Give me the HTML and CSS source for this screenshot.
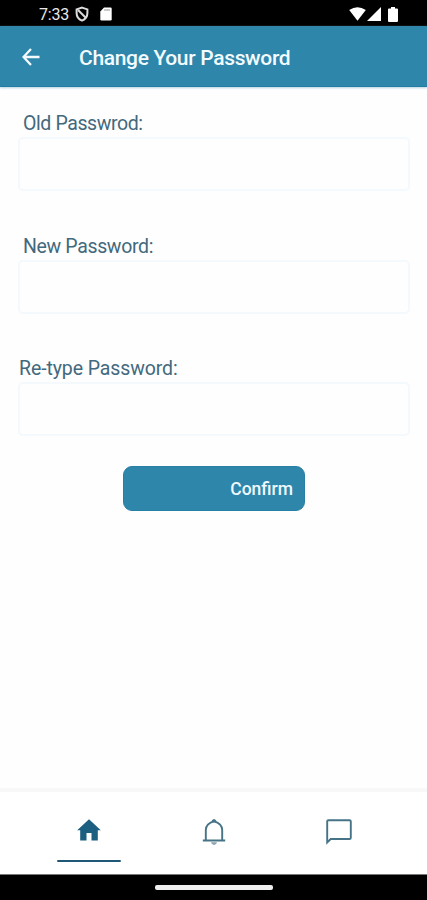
FILE: index.html
```
<!DOCTYPE html>
<html lang="en">

<head>
    <meta charset="UTF-8">
    <meta name="viewport" content="width=device-width, initial-scale=1.0">
    <title>Change Your Password</title>
    <link rel="stylesheet" href="styles.css">
</head>

<body>
    <div class="status-bar">
        <span class="time">7:33</span>
        <svg class="blocked-icon" width="14" height="16" viewBox="0 0 14 16">
            <path d="M7 1.6 L12.4 3.4 V7 C12.4 11 10 13.5 7 14.6 C4 13.5 1.6 11 1.6 7 V3.4 Z" fill="none" stroke="#ddd" stroke-width="2"/>
            <path d="M3 4 L11 12" stroke="#ddd" stroke-width="1.9"/>
        </svg>
        <svg class="card-icon" width="12" height="14" viewBox="0 0 12 14">
            <path d="M4 0.5 H10.5 Q11.7 0.5 11.7 1.7 V12.3 Q11.7 13.5 10.5 13.5 H1.5 Q0.3 13.5 0.3 12.3 V4.5 Z" fill="#fff"/>
            <path d="M5 2 V4 M7 2 V4 M9 2 V4" stroke="#888" stroke-width="0.9"/>
        </svg>
        <div class="status-right">
            <svg width="17" height="14" viewBox="0 0 17 14"><path d="M0.2 3 Q8.5 -2.5 16.8 3 L8.5 13.7 Z" fill="#fff"/></svg>
            <svg width="14" height="14" viewBox="0 0 14 14"><path d="M14 0 V14 H0 Z" fill="#fff"/></svg>
            <svg class="battery" width="10" height="15" viewBox="0 0 10 15"><path d="M3 0 H7 V1.5 H9 Q10 1.5 10 2.5 V14 Q10 15 9 15 H1 Q0 15 0 14 V2.5 Q0 1.5 1 1.5 H3 Z" fill="#fff"/></svg>
        </div>
    </div>

    <header class="header">
        <svg class="back" width="18" height="18" viewBox="0 0 18 18">
            <path d="M17.5 9 H1.5 M9 1 L1.5 9 L9 17" fill="none" stroke="#f3fbff" stroke-width="2.3"/>
        </svg>
        <h1 class="title">Change Your Password</h1>
    </header>

    <main class="form">
        <div class="field">
            <label class="label old-label" for="old">Old Passwrod:</label>
            <input class="input" type="password" id="old">
        </div>
        <div class="field">
            <label class="label new-label" for="new">New Password:</label>
            <input class="input" type="password" id="new">
        </div>
        <div class="field">
            <label class="label retype-label" for="retype">Re-type Password:</label>
            <input class="input" type="password" id="retype">
        </div>
        <button class="confirm">Confirm</button>
    </main>

    <nav class="tabs">
        <a class="tab active">
            <svg class="home-icon" width="24" height="22" viewBox="0 0 24 22"><path d="M12 0.3 L23.8 11.3 H20.8 V21.5 H14.5 V14 H9.5 V21.5 H3.2 V11.3 H0.2 Z" fill="#1d5f80"/></svg>
        </a>
        <a class="tab">
            <svg width="24" height="28" viewBox="0 0 24 28">
                <path d="M0.8 22.5 H23.2 M3.8 22 V12 C3.8 7.8 6.5 5 12 3.2 C17.5 5 20.2 7.8 20.2 12 V22" fill="none" stroke="#467486" stroke-width="1.9"/>
                <path d="M9.8 4.5 V2.5 Q12 -0.5 14.2 2.5 V4.5 Z" fill="#467486"/>
                <path d="M9 24.3 H15 Q14.5 27 12 27 Q9.5 27 9 24.3 Z" fill="#8ba3ad"/>
            </svg>
        </a>
        <a class="tab">
            <svg width="26" height="26" viewBox="0 0 26 26"><path d="M1.2 23.5 V2.5 Q1.2 1.2 2.5 1.2 H23.5 Q24.8 1.2 24.8 2.5 V18.7 Q24.8 20 23.5 20 H4.7 Z" fill="none" stroke="#467486" stroke-width="1.9"/></svg>
        </a>
    </nav>

    <div class="gesture-bar">
        <div class="handle"></div>
    </div>
</body>

</html>
```
FILE: styles.css
```
* {
    box-sizing: border-box;
}

body {
    margin: 0;
    width: 427px;
    height: 900px;
    display: flex;
    flex-direction: column;
    background-color: #fefefe;
    font-family: Roboto, "Liberation Sans", sans-serif;
    overflow: hidden;
}

.status-bar {
    height: 26px;
    padding: 2px 29px 0 39px;
    display: flex;
    align-items: center;
    background-color: #000;
}

.time {
    width: 36px;
    color: #e8e8e8;
    font-size: 16px;
    letter-spacing: -0.2px;
}

.card-icon {
    margin-left: 11px;
}

.status-right {
    margin-left: auto;
    display: flex;
    align-items: center;
    gap: 1px;
}

.battery {
    margin-left: 6px;
}

.header {
    height: 61px;
    padding: 2px 0 0 22px;
    display: flex;
    align-items: center;
    background-color: #2e86ab;
    border-bottom: 1px solid #217da3;
    box-shadow: 0 1px 2px #b5d3df;
}

.title {
    margin: 2px 0 0 39px;
    color: #f3fbff;
    font-size: 21px;
    font-weight: 500;
    letter-spacing: -0.33px;
}

.form {
    flex: 1;
    padding: 22px 18px 0;
    display: flex;
    flex-direction: column;
}

.field {
    height: 122.5px;
    display: flex;
    flex-direction: column;
}

.label {
    height: 28px;
    line-height: 29px;
    padding-left: 5px;
    color: #42697d;
    font-size: 19.5px;
}

.old-label {
    letter-spacing: -0.4px;
}

.new-label {
    letter-spacing: -0.35px;
}

.retype-label {
    padding-left: 1px;
    letter-spacing: -0.1px;
}

.input {
    height: 54px;
    width: 392px;
    border: 2px solid #f3f9fc;
    border-radius: 5px;
    background-color: #fefefe;
}

.confirm {
    width: 182px;
    height: 45px;
    margin: -11px 0 0 105px;
    padding: 2px 11px 0 0;
    border: 1px solid #267fa4;
    border-radius: 9px;
    background-color: #2e86ab;
    color: #eef9ff;
    font-family: inherit;
    font-size: 17.5px;
    font-weight: 500;
    text-align: right;
}

.tabs {
    height: 86px;
    padding: 0 26px;
    display: flex;
    border-top: 4px solid #f8f8f8;
    background-color: #fff;
}

.tab {
    flex: 1;
    height: 70px;
    display: flex;
    align-items: center;
    justify-content: center;
    padding-top: 9px;
}

.home-icon {
    margin-bottom: 4px;
}

.active {
    position: relative;
}

.active::after {
    content: "";
    position: absolute;
    left: 31px;
    bottom: 0;
    width: 64px;
    height: 2px;
    border-radius: 1px;
    background-color: #1f5875;
}

.gesture-bar {
    height: 26px;
    display: flex;
    align-items: center;
    justify-content: center;
    border-top: 1px solid #777;
    background-color: #000;
}

.handle {
    width: 118px;
    height: 5px;
    border-radius: 2px;
    background-color: #eee;
}
```
